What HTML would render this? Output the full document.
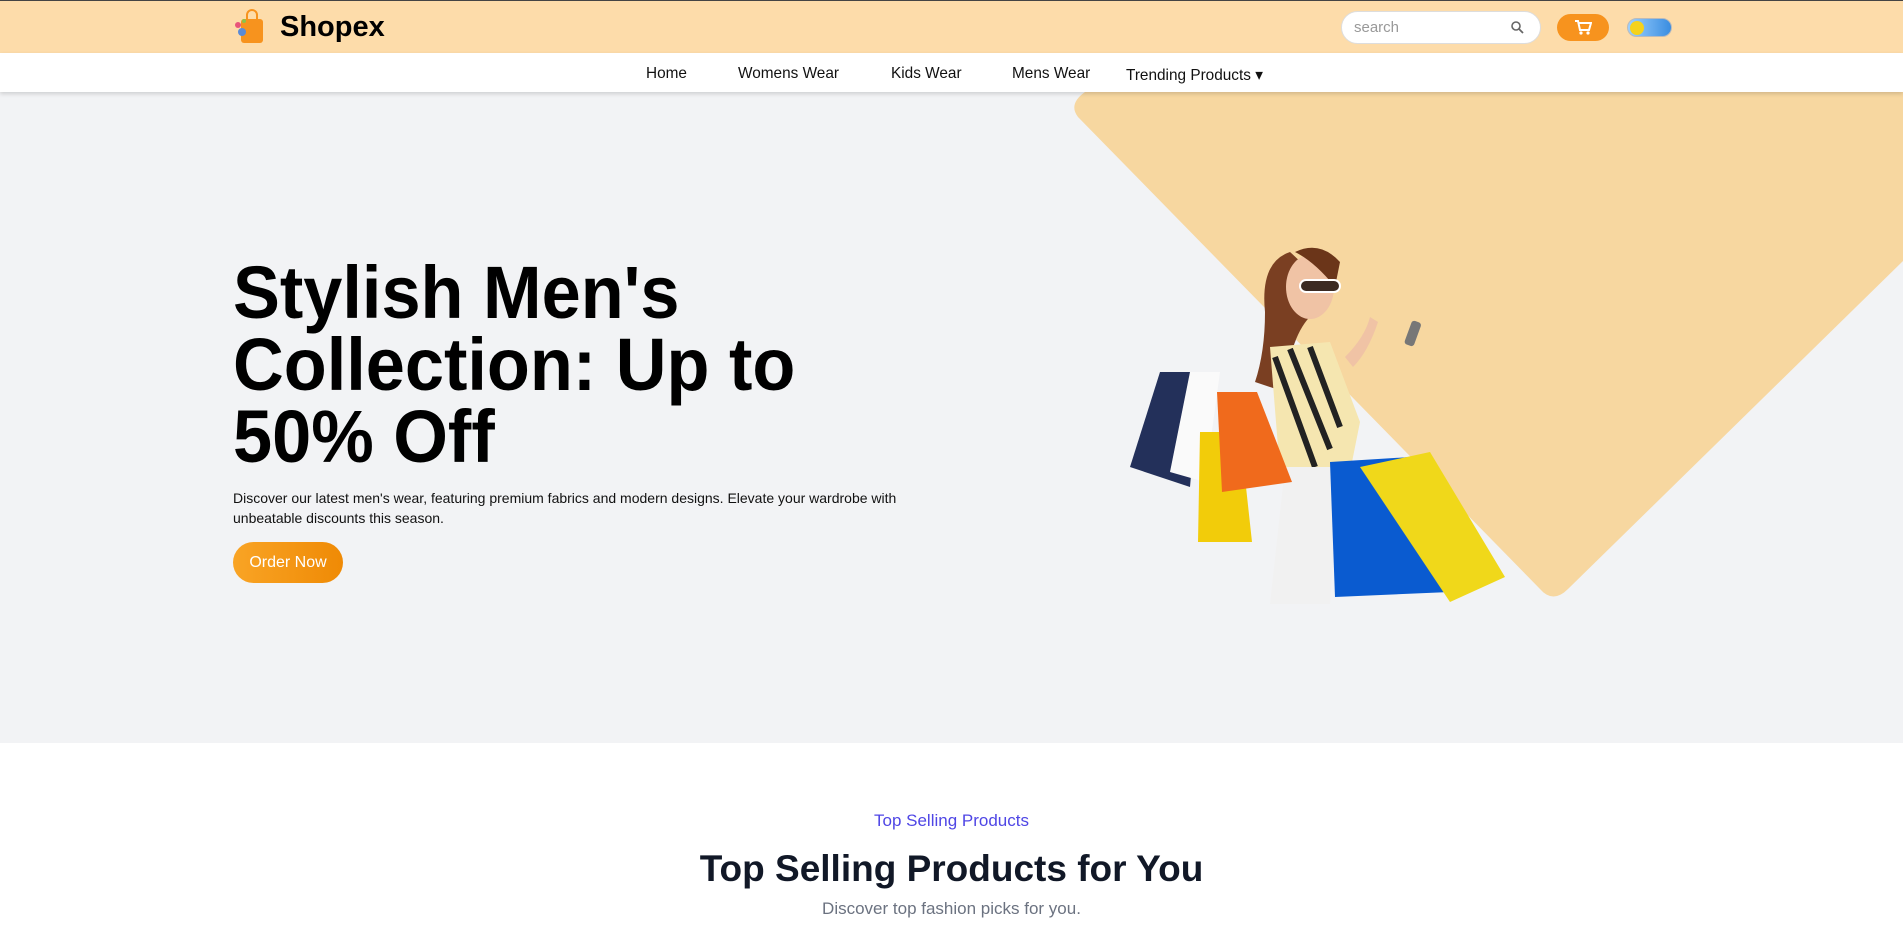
<!DOCTYPE html>
<html><head><meta charset="utf-8"><style>
*{margin:0;padding:0;box-sizing:border-box}
body{width:1903px;height:945px;overflow:hidden;font-family:"Liberation Sans",sans-serif;background:#fff;position:relative}
.top{position:absolute;left:0;top:0;width:1903px;height:53px;background:#fddcaa;border-top:1px solid #444}
.nav{position:absolute;left:0;top:53px;width:1903px;height:39px;background:#fff;box-shadow:0 2px 4px rgba(0,0,0,.15);z-index:3}
.nav span{position:absolute;top:12px;font-size:16px;color:#111;transform:scaleX(.96);transform-origin:left;white-space:nowrap}
.hero{position:absolute;left:0;top:92px;width:1903px;height:651px;background:#f2f3f5;overflow:hidden}
h1{position:absolute;left:233px;top:257px;font-size:74px;line-height:72px;font-weight:bold;color:#000;transform:scaleX(.95);transform-origin:left;white-space:nowrap}
.p{position:absolute;left:233px;top:488px;font-size:14px;line-height:20px;color:#111;white-space:nowrap}
.btn{position:absolute;left:233px;top:542px;width:110px;height:41px;border-radius:21px;background:linear-gradient(90deg,#f9a425,#ef8a05);color:#fff;font-size:16px;text-align:center;line-height:41px}
.c{position:absolute;left:0;width:1903px;text-align:center}
</style></head><body>
<div class="top">
 <svg style="position:absolute;left:233px;top:8px" width="40" height="36" viewBox="0 0 40 36">
  <rect x="8" y="10" width="22" height="24" rx="3" fill="#f7931e"/>
  <path d="M14 10 v-4 a5 5 0 0 1 10 0 v4" stroke="#f7931e" stroke-width="2" fill="none"/>
  <circle cx="5" cy="16" r="3" fill="#e8557a"/><circle cx="9" cy="23" r="4" fill="#5b8bd6"/><circle cx="11" cy="12" r="2" fill="#8bc34a"/>
 </svg>
 <div style="position:absolute;left:280px;top:10px;font-size:29px;font-weight:bold;color:#000">Shopex</div>
 <div style="position:absolute;left:1341px;top:10px;width:200px;height:33px;border-radius:17px;background:#fff;border:1px solid #ddd"><span style="position:absolute;left:12px;top:7px;font-size:15px;color:#999">search</span>
 <svg style="position:absolute;right:16px;top:9px" width="13" height="13" viewBox="0 0 13 13"><circle cx="5" cy="5" r="4" stroke="#666" stroke-width="1.6" fill="none"/><path d="M8 8l4 4" stroke="#666" stroke-width="1.8"/></svg></div>
 <div style="position:absolute;left:1557px;top:13px;width:52px;height:27px;border-radius:14px;background:#f7931e">
 <svg style="position:absolute;left:17px;top:5px" width="18" height="17" viewBox="0 0 18 17"><path d="M1 2h3l2 9h9l2-7H5" stroke="#fff" stroke-width="2" fill="none"/><circle cx="7" cy="14" r="1.6" fill="#fff"/><circle cx="14" cy="14" r="1.6" fill="#fff"/></svg></div>
 <div style="position:absolute;left:1627px;top:17px;width:45px;height:19px;border-radius:10px;background:linear-gradient(90deg,#9cd0ff,#3a8de0);border:1px solid #bbb"><div style="position:absolute;left:2px;top:2px;width:14px;height:14px;border-radius:50%;background:#f5d21c"></div></div>
</div>
<div class="nav">
 <span style="left:646px">Home</span><span style="left:738px">Womens Wear</span><span style="left:891px">Kids Wear</span><span style="left:1012px">Mens Wear</span><span style="left:1126px">Trending Products ▾</span>
</div>
<div class="hero">
 <svg style="position:absolute;left:0;top:0" width="1903" height="651">
  <path d="M1085 0 L1903 0 L1903 169 L1568 497 Q1553 512 1540 497 L1078 25 Q1068 12 1085 0 Z" fill="#f7d7a0"/>
  <g transform="translate(0,-95)">
  <path d="M1290 255 q-30 10 -25 60 q0 40 -10 70 l30 10 q5 -60 30 -80 q20 -20 -25 -60z" fill="#7a3f22"/>
  <ellipse cx="1310" cy="290" rx="24" ry="32" fill="#f0c3a5"/>
  <path d="M1295 255 q25 -12 45 10 l-5 25 q-20 -25 -40 -35z" fill="#6b3519"/>
  <rect x="1300" y="283" width="40" height="12" rx="6" fill="#3b2a22" stroke="#fff" stroke-width="2"/>
  <path d="M1270 350 l60 -5 l30 80 l-10 50 l-70 0 z" fill="#f5e6b0"/>
  <path d="M1275 360 l40 110 M1290 352 l40 100 M1310 350 l30 80" stroke="#222" stroke-width="6"/>
  <path d="M1285 470 l55 0 l-10 137 l-60 0 z" fill="#f1f1f1"/>
  <path d="M1345 360 q20 -20 25 -40 l8 5 q-10 30 -25 45z" fill="#f0c3a5"/>
  <rect x="1408" y="324" width="10" height="25" rx="3" fill="#777" transform="rotate(20 1413 336)"/>
  <path d="M1130 470 l30 -95 l40 0 l-10 115z" fill="#23305a"/>
  <path d="M1170 475 l20 -100 l30 0 l-15 110z" fill="#fafafa"/>
  <path d="M1198 545 l2 -110 l40 0 l12 110z" fill="#f2cc0a"/>
  <path d="M1222 495 l-5 -100 l40 0 l35 90z" fill="#f06a1c"/>
  <path d="M1335 600 l-5 -135 l80 -5 l40 135z" fill="#0a5bd0"/>
  <path d="M1360 470 l70 -15 l75 125 l-55 25z" fill="#f0d81a"/>
  </g>
 </svg>
</div>
<h1>Stylish Men's<br>Collection: Up to<br>50% Off</h1>
<div class="p">Discover our latest men's wear, featuring premium fabrics and modern designs. Elevate your wardrobe with<br>unbeatable discounts this season.</div>
<div class="btn">Order Now</div>
<div class="c" style="top:811px;font-size:17px;color:#4f46e5">Top Selling Products</div>
<div class="c" style="top:848px;font-size:37px;font-weight:bold;color:#111827">Top Selling Products for You</div>
<div class="c" style="top:899px;font-size:17px;color:#6b7280">Discover top fashion picks for you.</div>
</body></html>
